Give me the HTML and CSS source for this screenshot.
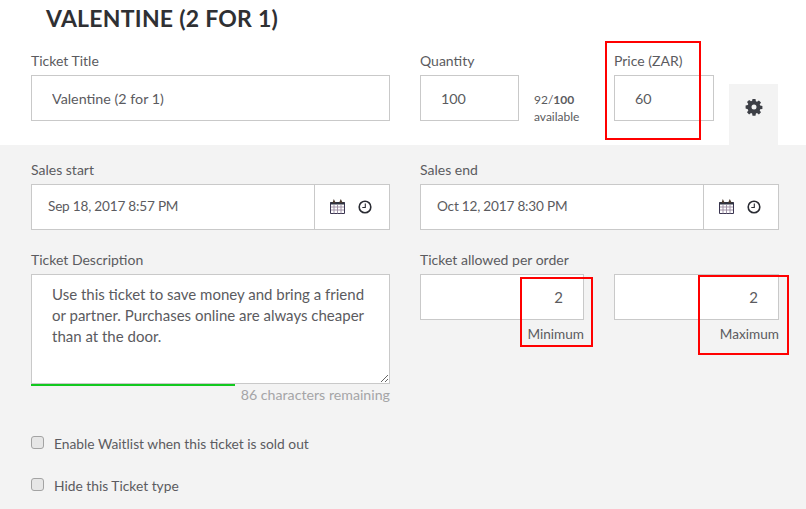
FILE: index.html
```html
<!DOCTYPE html>
<html lang="en">
<head>
<meta charset="utf-8">
<title>Valentine ticket</title>
<link rel="stylesheet" href="styles.css">
</head>
<body>
<svg class="defs" width="0" height="0">
  <symbol id="cal" viewBox="0 0 15 15">
    <path d="M.5 3.500h14v11H.5z" fill="none" stroke="#3a3550" stroke-width="1"/>
    <path d="M.5 3h14v2.500H.5z" fill="#2f3340"/>
    <path d="M1 8h13M1 11h13M4 5.500v9M7.500 5.500v9M11 5.500v9" stroke="#9a8aa0" stroke-width=".9" fill="none"/>
    <path d="M2.500 4 3.800 0 5.500 3.500 6 4zM9 4 10.800 0 12.500 3.500 13 4z" fill="#4a3a30"/>
  </symbol>
  <symbol id="clk" viewBox="0 0 14 14">
    <circle cx="7" cy="7" r="5.800" fill="#fff" stroke="#2a2c33" stroke-width="1.600"/>
    <path d="M7.300 3.500v4H4.300" fill="none" stroke="#2a2c33" stroke-width="1.100"/>
  </symbol>
</svg>

<section class="top">
  <h1 class="title">VALENTINE (2 FOR 1)</h1>
  <div class="columns">
    <div class="field">
      <label class="label">Ticket Title</label>
      <input class="input input-pad" type="text" value="Valentine (2 for 1)">
    </div>
    <div class="top-right">
      <div class="field qty">
        <label class="label">Quantity</label>
        <input class="input input-pad" type="text" value="100">
      </div>
      <p class="avail">92/<b>100</b><br>available</p>
      <div class="field price">
        <label class="label">Price (ZAR)</label>
        <input class="input input-pad" type="text" value="60">
      </div>
      <div class="gear-tab">
        <svg class="gear" viewBox="0 0 16 16" aria-hidden="true">
          <path fill="#3d3f46" fill-rule="evenodd" d="M6.500 0h3l.4 2.200 1.100.5 1.900-1.300 2.100 2.100-1.300 1.900.5 1.100 2.200.4v3l-2.200.4-.5 1.100 1.300 1.900-2.100 2.100-1.900-1.300-1.100.5-.4 2.200h-3l-.4-2.200-1.100-.5-1.900 1.300-2.100-2.100 1.300-1.900-.5-1.100L-.4 9.500v-3l2.200-.4.5-1.100-1.300-1.900 2.100-2.100 1.900 1.300 1.100-.5zM8 5.500a2.500 2.500 0 1 0 0 5 2.500 2.500 0 0 0 0-5z"/>
        </svg>
      </div>
    </div>
  </div>
</section>

<section class="panel">
  <div class="columns">
    <div class="field">
      <label class="label">Sales start</label>
      <div class="datebox">
        <span class="date">Sep 18, 2017 8:57 PM</span>
        <span class="date-icons"><svg class="ic-cal"><use href="#cal"/></svg><svg class="ic-clk"><use href="#clk"/></svg></span>
      </div>
    </div>
    <div class="field">
      <label class="label">Sales end</label>
      <div class="datebox">
        <span class="date">Oct 12, 2017 8:30 PM</span>
        <span class="date-icons"><svg class="ic-cal"><use href="#cal"/></svg><svg class="ic-clk"><use href="#clk"/></svg></span>
      </div>
    </div>
  </div>

  <div class="columns row-two">
    <div class="field">
      <label class="label">Ticket Description</label>
      <textarea class="textarea">Use this ticket to save money and bring a friend or partner. Purchases online are always cheaper than at the door.</textarea>
      <div class="meter"><div class="meter-fill" style="width:56.800%"></div></div>
      <p class="remaining">86 characters remaining</p>
    </div>
    <div class="field">
      <label class="label">Ticket allowed per order</label>
      <div class="minmax">
        <div class="mm mm-min">
          <input class="input input-right" type="text" value="2">
          <span class="mm-label">Minimum</span>
        </div>
        <div class="mm mm-max">
          <input class="input input-right" type="text" value="2">
          <span class="mm-label">Maximum</span>
        </div>
      </div>
    </div>
  </div>

  <label class="check check-first"><span class="box"></span>Enable Waitlist when this ticket is sold out</label>
  <label class="check"><span class="box"></span>Hide this Ticket type</label>
</section>

<div class="mark mark-price"></div>
<div class="mark mark-min"></div>
<div class="mark mark-max"></div>
</body>
</html>
```
FILE: styles.css
```css
* { box-sizing: border-box; }
html, body { margin: 0; padding: 0; }
body {
  position: relative;
  width: 806px;
  height: 509px;
  overflow: hidden;
  background: #f3f3f3;
  font-family: "Lato", "Liberation Sans", sans-serif;
  font-size: 14px;
  color: #5b5b60;
}
.defs { position: absolute; }
.top { background: #fff; height: 145px; padding: 4px 27px 0 31px; }
.title {
  margin: 0 0 0 15px;
  height: 29px;
  font-size: 23px;
  line-height: 29px;
  font-weight: 700;
  color: #2f3033;
  letter-spacing: .25px;
}
.columns { display: grid; grid-template-columns: 359px 359px; column-gap: 30px; }
.top .columns { margin-top: 18px; }
.field { display: flex; flex-direction: column; }
.label { height: 24px; line-height: 20px; font-size: 14px; color: #5b5b60; }
.input {
  display: block;
  width: 100%;
  height: 46px;
  border: 1px solid #c9c9c9;
  border-radius: 0;
  background: #fff;
  font: 14.300px "Lato", "Liberation Sans", sans-serif;
  color: #5b5b60;
  outline: none;
}
.input-pad { padding: 0 20px; }
.input-right { text-align: right; padding: 0 20px 0 0; font-size: 15px; }
.top-right { display: flex; align-items: flex-start; }
.qty { width: 99px; }
.avail { margin: 40px 0 0 15px; width: 80px; font-size: 12px; line-height: 17px; color: #5b5b60; }
.avail b { font-weight: 700; }
.price { width: 100px; }
.gear-tab {
  width: 49px;
  height: 61px;
  margin: 33px 0 0 15px;
  background: #f3f3f3;
  display: flex;
  justify-content: center;
  padding-top: 15px;
}
.gear { width: 16px; height: 16px; overflow: visible; }
.panel { padding: 15px 27px 0 31px; }
.datebox {
  display: flex;
  height: 46px;
  border: 1px solid #c9c9c9;
  background: #fff;
}
.date { flex: 1; padding-left: 16px; line-height: 42px; font-size: 13.600px; letter-spacing: -.2px; color: #5b5b60; }
.date-icons {
  width: 75px;
  border-left: 1px solid #c9c9c9;
  display: flex;
  align-items: center;
  gap: 13px;
  padding-left: 15px;
}
.ic-cal { width: 15px; height: 15px; margin-top: -1px; }
.ic-clk { width: 14px; height: 14px; }
.row-two { margin-top: 20px; }
.textarea {
  display: block;
  width: 100%;
  height: 110px;
  padding: 9px 20px 0;
  border: 1px solid #c9c9c9;
  border-radius: 0;
  background: #fff;
  font: 15px/21px "Lato", "Liberation Sans", sans-serif;
  color: #5b5b60;
  outline: none;
  resize: vertical;
}
.meter { height: 2px; margin-top: 0; }
.meter-fill { height: 2px; background: #12c91f; }
.remaining { margin: 0; text-align: right; font-size: 14.200px; line-height: 18px; color: #a5a5a7; }
.minmax { display: flex; gap: 30px; }
.mm { display: flex; flex-direction: column; align-items: flex-end; }
.mm-min { width: 164px; }
.mm-max { width: 165px; }
.mm-label { margin-top: 5px; font-size: 13.600px; line-height: 18px; color: #5b5b60; }
.check { display: flex; align-items: center; gap: 10px; height: 18px; font-size: 13.800px; color: #5b5b60; }
.check-first { margin-top: 30px; }
.check + .check { margin-top: 24px; }
.box {
  width: 13px;
  height: 13px;
  margin-top: -1px;
  border: 1px solid #a3a3a3;
  border-radius: 3px;
  background: #e6e6e6;
}
.mark { position: absolute; border: 2px solid #f00; }
.mark-price { left: 605px; top: 41px; width: 96px; height: 99px; }
.mark-min { left: 520px; top: 277px; width: 73px; height: 70px; }
.mark-max { left: 698px; top: 275px; width: 91px; height: 80px; }
```
